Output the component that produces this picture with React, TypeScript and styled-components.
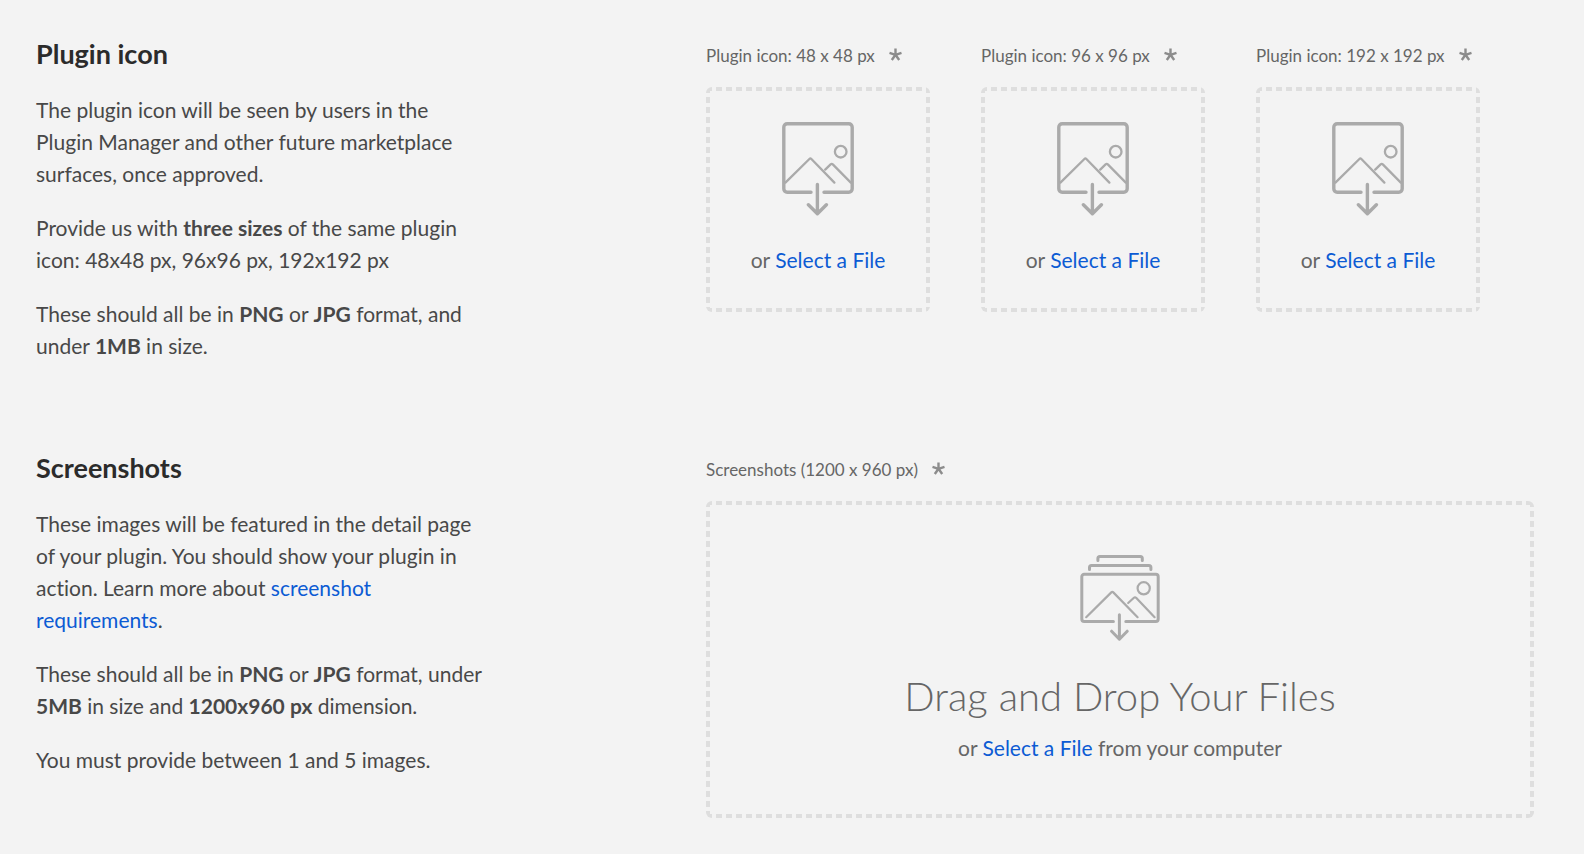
import React, { useRef } from 'react';
import styled, { createGlobalStyle, css } from 'styled-components';

const color = {
  page: '#f3f3f3',
  heading: '#2b2b2b',
  body: '#484848',
  label: '#666666',
  icon: '#aaaaaa',
  asterisk: '#8c8c8c',
  dash: '#dedede',
  link: '#0c5bd4',
};

const GlobalStyle = createGlobalStyle`
  *, *::before, *::after {
    box-sizing: border-box;
  }

  body {
    margin: 0;
    background: ${color.page};
    color: ${color.body};
    font-family: Lato, 'Open Sans', sans-serif;
    font-size: 21px;
    font-variant-ligatures: no-common-ligatures;
    line-height: 32px;
  }
`;

const Page = styled.main`
  display: flex;
  flex-direction: column;
  gap: 90px;
  padding: 38px 50px 36px 36px;
`;

const Section = styled.section`
  display: grid;
  grid-template-columns: minmax(0, 670fr) minmax(0, 828fr);
  align-items: start;
`;

const Copy = styled.div`
  display: flex;
  flex-direction: column;
  gap: 22px;
  max-width: 448px;
`;

const Heading = styled.h2`
  margin: 0 0 2px;
  color: ${color.heading};
  font-size: 27px;
  font-weight: 700;
  line-height: 32px;
`;

const Paragraph = styled.p`
  margin: 0;
`;

const linkText = css`
  color: ${color.link};
  text-decoration: none;

  &:hover {
    text-decoration: underline;
  }
`;

const TextLink = styled.a`
  ${linkText}
`;

const LinkButton = styled.button`
  ${linkText}
  padding: 0;
  border: 0;
  background: none;
  font: inherit;
  cursor: pointer;
`;

const UploadRow = styled.div`
  display: flex;
  flex-wrap: wrap;
  gap: 51px;
  padding-top: 6px;
`;

const Field = styled.div<{ $wide?: boolean }>`
  display: flex;
  flex-direction: column;
  gap: 19px;
  width: ${({ $wide }) => ($wide ? '100%' : '224px')};
`;

const FieldLabel = styled.label`
  display: flex;
  align-items: center;
  gap: 14px;
  color: ${color.label};
  font-size: 17px;
  line-height: 24px;
  white-space: nowrap;
`;

const dashes = (direction: string) =>
  `repeating-linear-gradient(${direction}, ${color.dash} 0 6px, transparent 6px 10px)`;

const DropZone = styled.div<{ $wide?: boolean }>`
  display: flex;
  flex-direction: column;
  align-items: center;
  padding: ${({ $wide }) => ($wide ? '54px 24px' : '35px 8px 36px')};
  border-radius: 6px;
  background-image: ${dashes('to right')}, ${dashes('to right')},
    ${dashes('to bottom')}, ${dashes('to bottom')};
  background-position: left top, left bottom, left top, right top;
  background-size: 100% 4px, 100% 4px, 4px 100%, 4px 100%;
  background-repeat: no-repeat;
  color: ${color.label};
`;

const ZoneTitle = styled.p`
  margin: 31px 0 12px;
  font-size: 40px;
  font-weight: 300;
  line-height: 48px;
`;

const ZoneAction = styled.p<{ $spaced?: boolean }>`
  margin: ${({ $spaced }) => ($spaced ? '28px 0 0' : '0')};
`;

const Drawing = styled.svg`
  display: block;
  fill: none;
  stroke: ${color.icon};
  stroke-linecap: round;
  stroke-linejoin: round;
`;

const Asterisk = styled.svg`
  display: block;
  margin-bottom: 4px;
  fill: none;
  stroke: ${color.asterisk};
  stroke-width: 2.4;
`;

function RequiredMark() {
  return (
    <Asterisk width="13" height="13" viewBox="0 0 13 13" role="img" aria-label="required">
      <path d="M6.5 6.8V0.4M6.5 6.8L0.5 4.8M6.5 6.8L12.5 4.8M6.5 6.8L2.8 12M6.5 6.8L10.2 12" />
    </Asterisk>
  );
}

function ImageDrop() {
  return (
    <Drawing width="72" height="94" viewBox="0 0 72 94" aria-hidden="true">
      <g strokeWidth="3.4">
        <path d="M29 70.2H5.2A3.4 3.4 0 0 1 1.8 66.8V5.2A3.4 3.4 0 0 1 5.2 1.8H66.8A3.4 3.4 0 0 1 70.2 5.2V66.8A3.4 3.4 0 0 1 66.8 70.2H42" />
        <path d="M35.4 62.4V91.4M26.4 82.8L35.4 91.8L44.4 82.8" />
      </g>
      <g strokeWidth="2.3">
        <path d="M3.4 60.6L27.4 37Q28.4 36 29.4 37L52.4 60.6" />
        <path d="M43.2 47.6L48.6 42.4Q49.7 41.4 50.8 42.4L68.8 60.6" />
        <circle cx="58.7" cy="29.7" r="5.8" />
      </g>
    </Drawing>
  );
}

function ImageStackDrop() {
  return (
    <Drawing width="80" height="86" viewBox="20 15 80 86" aria-hidden="true">
      <g strokeWidth="3">
        <path d="M37.9 20.6V18.5A2 2 0 0 1 39.9 16.5H80.3A2 2 0 0 1 82.3 18.5V20.6" />
        <path d="M29.5 29.6V27.5A2 2 0 0 1 31.5 25.5H88.9A2 2 0 0 1 90.9 27.5V29.6" />
        <path d="M53.4 81.5H24.2A2.4 2.4 0 0 1 21.8 79.1V36.7A2.4 2.4 0 0 1 24.2 34.3H95.8A2.4 2.4 0 0 1 98.2 36.7V79.1A2.4 2.4 0 0 1 95.8 81.5H65.8" />
        <path d="M59.4 74.8V98.8M51.6 91.2L59.4 99.2L67.2 91.2" />
      </g>
      <g strokeWidth="2.2">
        <path d="M26.2 77.2L51.3 52.4Q52.3 51.4 53.3 52.4L77.6 77.2" />
        <path d="M68.2 63L73.9 57.8Q75 56.8 76.1 57.8L94.6 77.2" />
        <circle cx="83.7" cy="48.3" r="6.1" />
      </g>
    </Drawing>
  );
}

function FilePicker({ id, multiple }: { id: string; multiple?: boolean }) {
  const input = useRef<HTMLInputElement>(null);
  return (
    <>
      <input ref={input} id={id} type="file" accept="image/png,image/jpeg" multiple={multiple} hidden />
      <LinkButton type="button" onClick={() => input.current?.click()}>
        Select a File
      </LinkButton>
    </>
  );
}

function IconField({ size }: { size: number }) {
  const id = `plugin-icon-${size}`;
  return (
    <Field>
      <FieldLabel htmlFor={id}>
        Plugin icon: {size} x {size} px
        <RequiredMark />
      </FieldLabel>
      <DropZone>
        <ImageDrop />
        <ZoneAction $spaced>
          or <FilePicker id={id} />
        </ZoneAction>
      </DropZone>
    </Field>
  );
}

export default function App() {
  return (
    <>
      <GlobalStyle />
      <Page>
        <Section>
          <Copy>
            <Heading>Plugin icon</Heading>
            <Paragraph>
              The plugin icon will be seen by users in the Plugin Manager and other future
              marketplace surfaces, once approved.
            </Paragraph>
            <Paragraph>
              Provide us with <strong>three sizes</strong> of the same plugin icon: 48x48 px, 96x96
              px, 192x192 px
            </Paragraph>
            <Paragraph>
              These should all be in <strong>PNG</strong> or <strong>JPG</strong> format, and under{' '}
              <strong>1MB</strong> in size.
            </Paragraph>
          </Copy>
          <UploadRow>
            {[48, 96, 192].map((size) => (
              <IconField key={size} size={size} />
            ))}
          </UploadRow>
        </Section>

        <Section>
          <Copy>
            <Heading>Screenshots</Heading>
            <Paragraph>
              These images will be featured in the detail page of your plugin. You should show your
              plugin in action. Learn more about{' '}
              <TextLink href="#requirements">screenshot requirements</TextLink>.
            </Paragraph>
            <Paragraph>
              These should all be in <strong>PNG</strong> or <strong>JPG</strong> format, under{' '}
              <strong>5MB</strong> in size and <strong>1200x960 px</strong> dimension.
            </Paragraph>
            <Paragraph>You must provide between 1 and 5 images.</Paragraph>
          </Copy>
          <UploadRow>
            <Field $wide>
              <FieldLabel htmlFor="screenshots">
                Screenshots (1200 x 960 px)
                <RequiredMark />
              </FieldLabel>
              <DropZone $wide>
                <ImageStackDrop />
                <ZoneTitle>Drag and Drop Your Files</ZoneTitle>
                <ZoneAction>
                  or <FilePicker id="screenshots" multiple /> from your computer
                </ZoneAction>
              </DropZone>
            </Field>
          </UploadRow>
        </Section>
      </Page>
    </>
  );
}
